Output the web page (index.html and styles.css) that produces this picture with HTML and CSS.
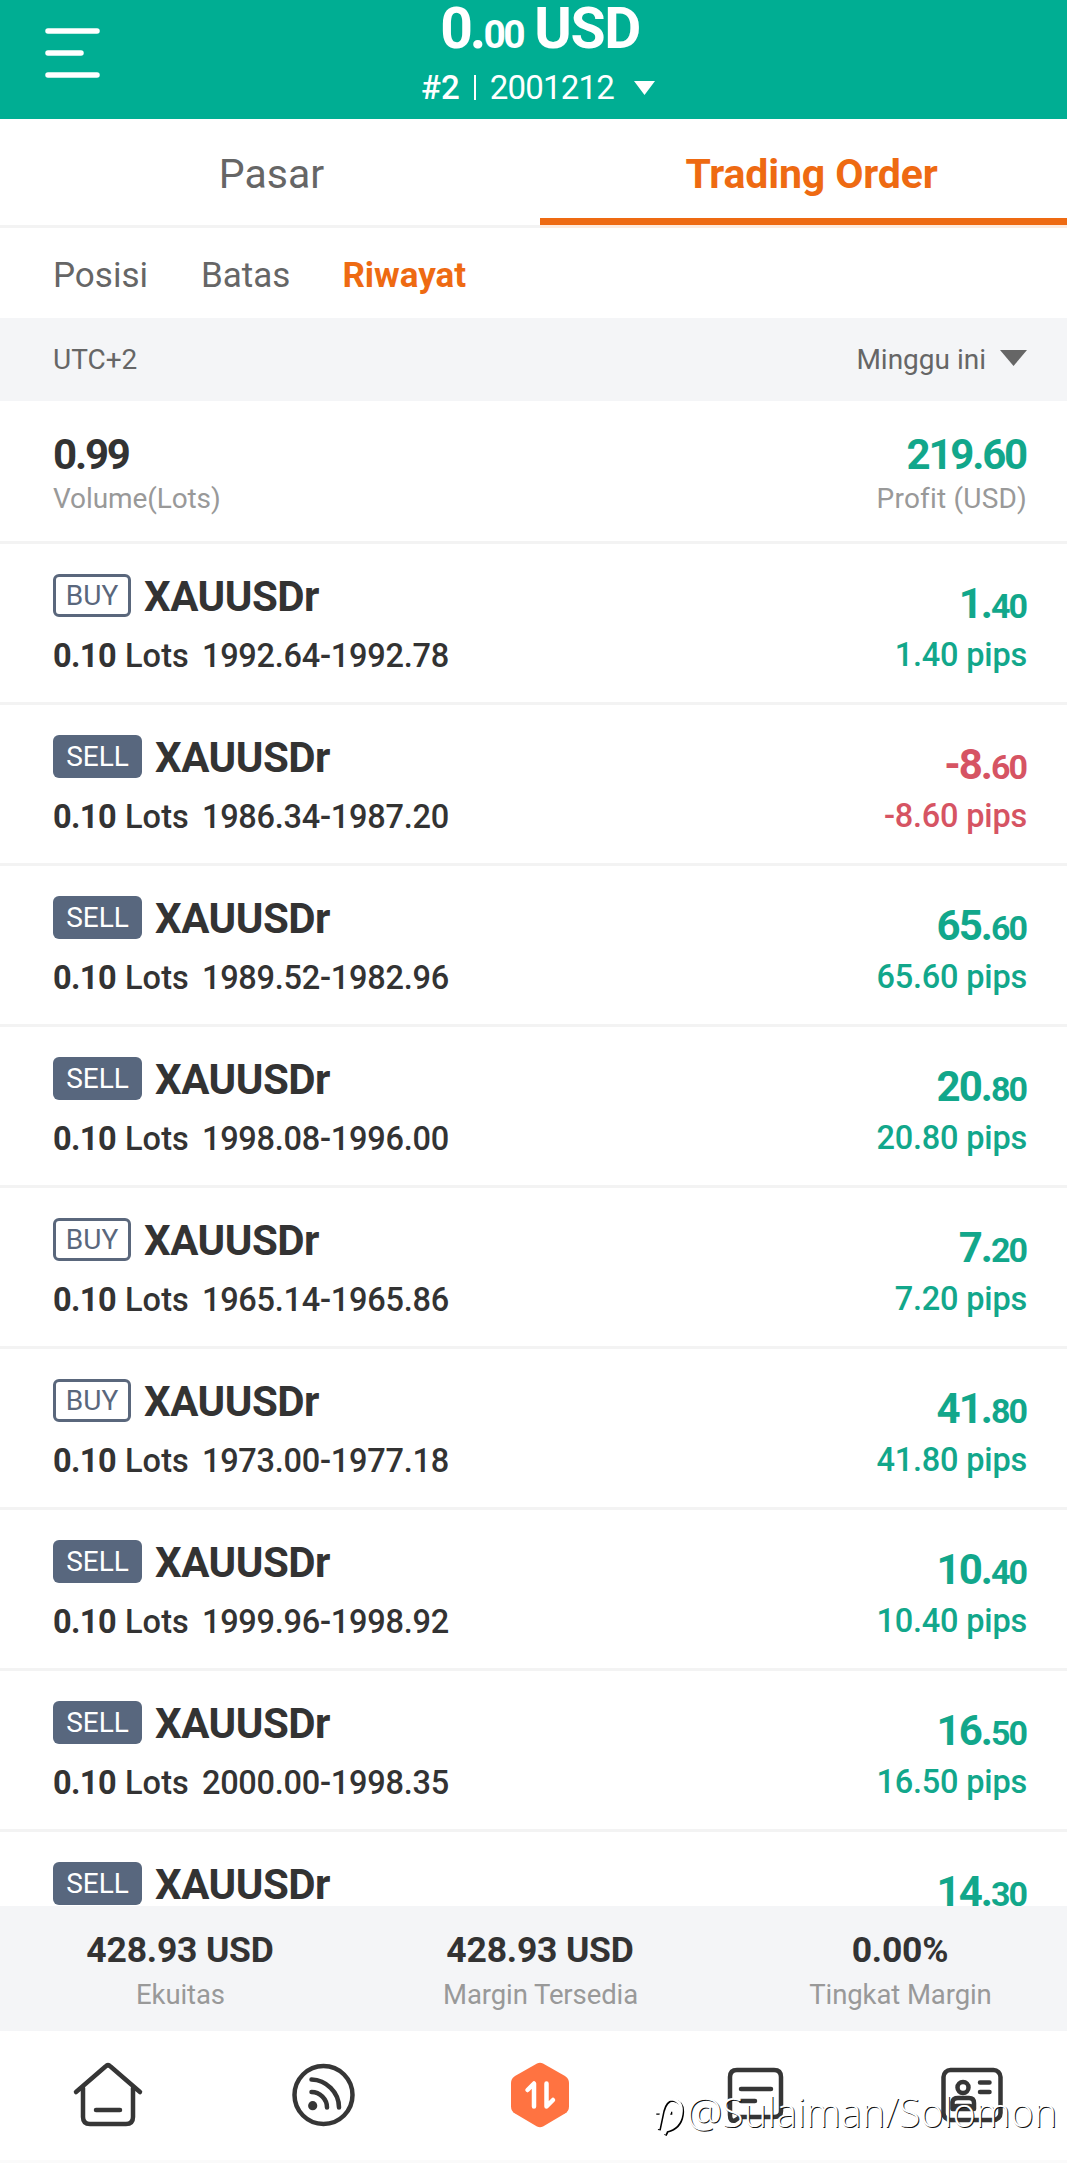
FILE: index.html
```html
<!DOCTYPE html>
<html lang="id">
<head>
    <meta charset="UTF-8">
    <meta name="viewport" content="width=device-width, initial-scale=1.0">
    <title>Trading Order</title>
    <link rel="stylesheet" href="styles.css">
</head>
<body>
<div class="app">
    <header class="header">
        <svg class="menu-icon" width="56" height="52" viewBox="0 0 56 52">
            <path d="M3 4H52M3 26H36M3 48H52" stroke="#fff" stroke-width="5.5" stroke-linecap="round"/>
        </svg>
        <div class="balance">0.<small>00</small> <span class="currency">USD</span></div>
        <div class="account">
            <b>#2</b><i class="divider"></i><span>2001212</span>
            <svg width="21" height="14" viewBox="0 0 21 14"><path d="M0 0H21L10.5 14Z" fill="#fff"/></svg>
        </div>
    </header>

    <nav class="tabs">
        <a class="tab">Pasar</a>
        <a class="tab active">Trading Order</a>
    </nav>

    <nav class="subtabs">
        <a>Posisi</a>
        <a>Batas</a>
        <a class="active">Riwayat</a>
    </nav>

    <div class="filter">
        <span>UTC+2</span>
        <span class="period">Minggu ini
            <svg width="27" height="16" viewBox="0 0 27 16"><path d="M0 0H27L13.5 16Z" fill="#666"/></svg>
        </span>
    </div>

    <section class="summary">
        <div>
            <div class="total">0.99</div>
            <div class="label">Volume(Lots)</div>
        </div>
        <div class="right">
            <div class="total up">219.60</div>
            <div class="label profit-label">Profit (USD)</div>
        </div>
    </section>

    <main class="orders">
        <div class="order">
            <div>
                <div class="symbol"><span class="badge buy">BUY</span>XAUUSDr</div>
                <div class="detail"><b>0.10</b><span class="lots">Lots</span>1992.64-1992.78</div>
            </div>
            <div class="right up">
                <div class="profit">1.<small>40</small></div>
                <div class="pips">1.40 pips</div>
            </div>
        </div>
        <div class="order">
            <div>
                <div class="symbol"><span class="badge sell">SELL</span>XAUUSDr</div>
                <div class="detail"><b>0.10</b><span class="lots">Lots</span>1986.34-1987.20</div>
            </div>
            <div class="right down">
                <div class="profit">-8.<small>60</small></div>
                <div class="pips">-8.60 pips</div>
            </div>
        </div>
        <div class="order">
            <div>
                <div class="symbol"><span class="badge sell">SELL</span>XAUUSDr</div>
                <div class="detail"><b>0.10</b><span class="lots">Lots</span>1989.52-1982.96</div>
            </div>
            <div class="right up">
                <div class="profit">65.<small>60</small></div>
                <div class="pips">65.60 pips</div>
            </div>
        </div>
        <div class="order">
            <div>
                <div class="symbol"><span class="badge sell">SELL</span>XAUUSDr</div>
                <div class="detail"><b>0.10</b><span class="lots">Lots</span>1998.08-1996.00</div>
            </div>
            <div class="right up">
                <div class="profit">20.<small>80</small></div>
                <div class="pips">20.80 pips</div>
            </div>
        </div>
        <div class="order">
            <div>
                <div class="symbol"><span class="badge buy">BUY</span>XAUUSDr</div>
                <div class="detail"><b>0.10</b><span class="lots">Lots</span>1965.14-1965.86</div>
            </div>
            <div class="right up">
                <div class="profit">7.<small>20</small></div>
                <div class="pips">7.20 pips</div>
            </div>
        </div>
        <div class="order">
            <div>
                <div class="symbol"><span class="badge buy">BUY</span>XAUUSDr</div>
                <div class="detail"><b>0.10</b><span class="lots">Lots</span>1973.00-1977.18</div>
            </div>
            <div class="right up">
                <div class="profit">41.<small>80</small></div>
                <div class="pips">41.80 pips</div>
            </div>
        </div>
        <div class="order">
            <div>
                <div class="symbol"><span class="badge sell">SELL</span>XAUUSDr</div>
                <div class="detail"><b>0.10</b><span class="lots">Lots</span>1999.96-1998.92</div>
            </div>
            <div class="right up">
                <div class="profit">10.<small>40</small></div>
                <div class="pips">10.40 pips</div>
            </div>
        </div>
        <div class="order">
            <div>
                <div class="symbol"><span class="badge sell">SELL</span>XAUUSDr</div>
                <div class="detail"><b>0.10</b><span class="lots">Lots</span>2000.00-1998.35</div>
            </div>
            <div class="right up">
                <div class="profit">16.<small>50</small></div>
                <div class="pips">16.50 pips</div>
            </div>
        </div>
        <div class="order">
            <div>
                <div class="symbol"><span class="badge sell">SELL</span>XAUUSDr</div>
            </div>
            <div class="right up">
                <div class="profit">14.<small>30</small></div>
            </div>
        </div>
    </main>

    <section class="account-bar">
        <div><b>428.93 USD</b><span>Ekuitas</span></div>
        <div><b>428.93 USD</b><span>Margin Tersedia</span></div>
        <div><b>0.00%</b><span>Tingkat Margin</span></div>
    </section>

    <nav class="bottom-nav">
        <svg class="icon" viewBox="0 0 72 72">
            <path d="M4 33L33.5 7.5Q36 5 38.5 7.5L68 33M11 29V58Q11 65 18 65H54Q61 65 61 58V29M24 51H48"/>
        </svg>
        <svg class="icon" viewBox="0 0 72 72">
            <circle cx="35.5" cy="36" r="29"/>
            <path d="M23.5 20.5C38 21 51 33 51 48.5M23.5 33C32 33 39 40 39 48.5"/>
            <circle class="dot" cx="24.7" cy="46.7" r="4.6"/>
        </svg>
        <svg class="icon" viewBox="0 0 72 72">
            <path class="hex" d="M33 4.5Q36 3 39 4.5L61 17Q65 19.5 65 24V47.5Q65 52 61 54.5L39 67.5Q36 69 33 67.5L11 54.5Q7 52 7 47.5V24Q7 19.5 11 17Z"/>
            <path class="arrows" d="M23.5 31L30 24.5V47.5M42.5 24.5V47.5L49 41"/>
        </svg>
        <svg class="icon" viewBox="0 0 72 72">
            <path d="M10 56V18Q10 11 17 11H54Q61 11 61 18V52Q61 58 54 58H20L15 61.5Q10 63 10 56ZM21 30H51M21 42H35"/>
        </svg>
        <svg class="icon" viewBox="0 0 72 72">
            <rect x="7.5" y="11" width="57" height="50" rx="7"/>
            <circle cx="27" cy="28.5" r="5.5"/>
            <path d="M44 23.5H53.5M44 33H53.5M16.5 50V43Q17 39 22 39H33Q38 39 38 44V50ZM20 47H34"/>
        </svg>
    </nav>

    <div class="watermark">
        <svg width="34" height="42" viewBox="0 0 34 42">
            <path d="M3 16H9M6 33L10 14Q13 3 20 3M20 3Q31 5 29 18Q27 31 14 34L12 38M17 16H19" fill="none" stroke="#000" stroke-width="3" transform="translate(1.3 1.3)"/>
            <path d="M3 16H9M6 33L10 14Q13 3 20 3M20 3Q31 5 29 18Q27 31 14 34L12 38M17 16H19" fill="none" stroke="#fff" stroke-width="3"/>
        </svg>
        <span>@Sulaiman/Solomon</span>
    </div>
</div>
</body>
</html>
```
FILE: styles.css
```css
* {
    box-sizing: border-box;
}
body {
    margin: 0;
    background: #fff;
    font-family: Roboto, "Noto Sans", sans-serif;
    color: #333;
    overflow: hidden;
}
.app {
    position: relative;
    width: 1080px;
    height: 2173px;
    overflow: hidden;
}

/* header */
.header {
    position: relative;
    height: 119px;
    background: #00ae93;
    color: #fff;
    text-align: center;
}
.menu-icon {
    position: absolute;
    left: 45px;
    top: 27px;
}
.balance {
    height: 57px;
    font-size: 57px;
    font-weight: 700;
    line-height: 58px;
    letter-spacing: -3px;
}
.balance small {
    font-size: 39px;
    line-height: 1;
    letter-spacing: -2.5px;
}
.currency {
    letter-spacing: -1.4px;
}
.account {
    display: flex;
    justify-content: center;
    align-items: center;
    height: 61px;
    padding-right: 4px;
    font-size: 33px;
    line-height: 61px;
}
.account b {
    font-weight: 500;
}
.account span {
    letter-spacing: -0.8px;
}
.account .divider {
    width: 2px;
    height: 25px;
    margin: 0 14px;
    background: #fff;
}
.account svg {
    margin-left: 20px;
}

/* tabs */
.tabs {
    display: flex;
    height: 109px;
}
.tab {
    width: 540px;
    padding-left: 3px;
    border-bottom: 3px solid #f3f3f3;
    font-size: 41px;
    line-height: 110px;
    text-align: center;
    color: #666;
}
.tab.active {
    border-bottom-color: #fdeadd;
    box-shadow: inset 0 -7px #ee6a12;
    font-weight: 700;
    letter-spacing: -0.15px;
    color: #ee6a12;
}
.subtabs {
    display: flex;
    gap: 53px;
    height: 90px;
    padding-left: 53px;
    font-size: 35px;
    line-height: 95px;
    color: #666;
}
.subtabs .active {
    margin-left: -1px;
    font-weight: 700;
    color: #ee6a12;
}

/* filter row */
.filter {
    display: flex;
    justify-content: space-between;
    height: 83px;
    padding: 0 53px;
    background: #f4f5f7;
    font-size: 28px;
    line-height: 84px;
    color: #666;
}
.period {
    display: flex;
    gap: 14px;
}
.period svg {
    margin-top: 32px;
}

/* totals */
.summary {
    display: flex;
    justify-content: space-between;
    height: 143px;
    padding: 29px 53px 0;
    border-bottom: 3px solid #f3f3f3;
}
.right {
    text-align: right;
}
.up {
    color: #12a78b;
}
.down {
    color: #d65463;
}
.total {
    font-size: 42px;
    font-weight: 700;
    line-height: 50px;
    letter-spacing: -2.2px;
}
.right .total {
    padding-right: 1px;
}
.label {
    font-size: 28px;
    line-height: 37px;
    letter-spacing: -0.1px;
    color: #999;
}
.profit-label {
    letter-spacing: 0.2px;
}

/* order list */
.orders {
    height: 1362px;
    overflow: hidden;
}
.order {
    display: flex;
    justify-content: space-between;
    height: 161px;
    padding: 30px 53px 0;
    border-bottom: 3px solid #f3f3f3;
}
.symbol {
    display: flex;
    height: 43px;
    font-size: 42px;
    font-weight: 700;
    line-height: 45px;
    letter-spacing: -0.5px;
}
.badge {
    height: 43px;
    margin-right: 13px;
    border-radius: 6px;
    font-size: 28px;
    font-weight: 400;
    line-height: 43px;
    text-align: center;
    letter-spacing: 0;
}
.buy {
    width: 78px;
    border: 3px solid #5a677c;
    line-height: 38px;
    color: #5a677c;
}
.sell {
    width: 89px;
    background: #58677e;
    color: #fff;
}
.detail {
    font-size: 32.5px;
    line-height: 79px;
    letter-spacing: -0.25px;
}
.detail b {
    letter-spacing: -0.6px;
}
.lots {
    margin: 0 13px 0 9px;
    letter-spacing: 0.1px;
}
.profit {
    padding-right: 1px;
    font-size: 42px;
    font-weight: 700;
    line-height: 60px;
    letter-spacing: -2px;
}
.profit small {
    font-size: 34px;
    line-height: 1;
}
.pips {
    font-size: 32.5px;
    line-height: 42px;
    letter-spacing: -0.2px;
}
.detail,
.pips {
    font-weight: 500;
}

/* account figures */
.account-bar {
    display: grid;
    grid-template-columns: repeat(3, 360px);
    height: 125px;
    padding-top: 20px;
    background: #f4f5f7;
    text-align: center;
}
.account-bar b {
    display: block;
    font-size: 35.5px;
    line-height: 48px;
    letter-spacing: -0.2px;
}
.account-bar span {
    display: block;
    padding-left: 1px;
    font-size: 27.5px;
    line-height: 41px;
    letter-spacing: -0.1px;
    color: #999;
}

/* bottom navigation */
.bottom-nav {
    display: flex;
    justify-content: space-around;
    height: 132px;
    padding-top: 28px;
    border-bottom: 3px solid #fafafa;
}
.icon {
    width: 72px;
    height: 72px;
    fill: none;
    stroke: #363636;
    stroke-width: 4.5;
    stroke-linecap: round;
    stroke-linejoin: round;
}
.icon .dot {
    fill: #363636;
    stroke: none;
}
.icon .hex {
    fill: #ff7341;
    stroke: none;
}
.icon .arrows {
    stroke: #fff;
    stroke-width: 4.5;
}

.watermark {
    position: absolute;
    left: 652px;
    top: 2084px;
    display: flex;
    align-items: center;
    height: 56px;
    font-family: "Open Sans", sans-serif;
    font-size: 39.6px;
    font-weight: 300;
    line-height: 56px;
    color: #fff;
    text-shadow: 1px 1px 0 #111;
}
.watermark span {
    margin-left: 1px;
}
.watermark svg {
    margin-top: 10px;
}
```
